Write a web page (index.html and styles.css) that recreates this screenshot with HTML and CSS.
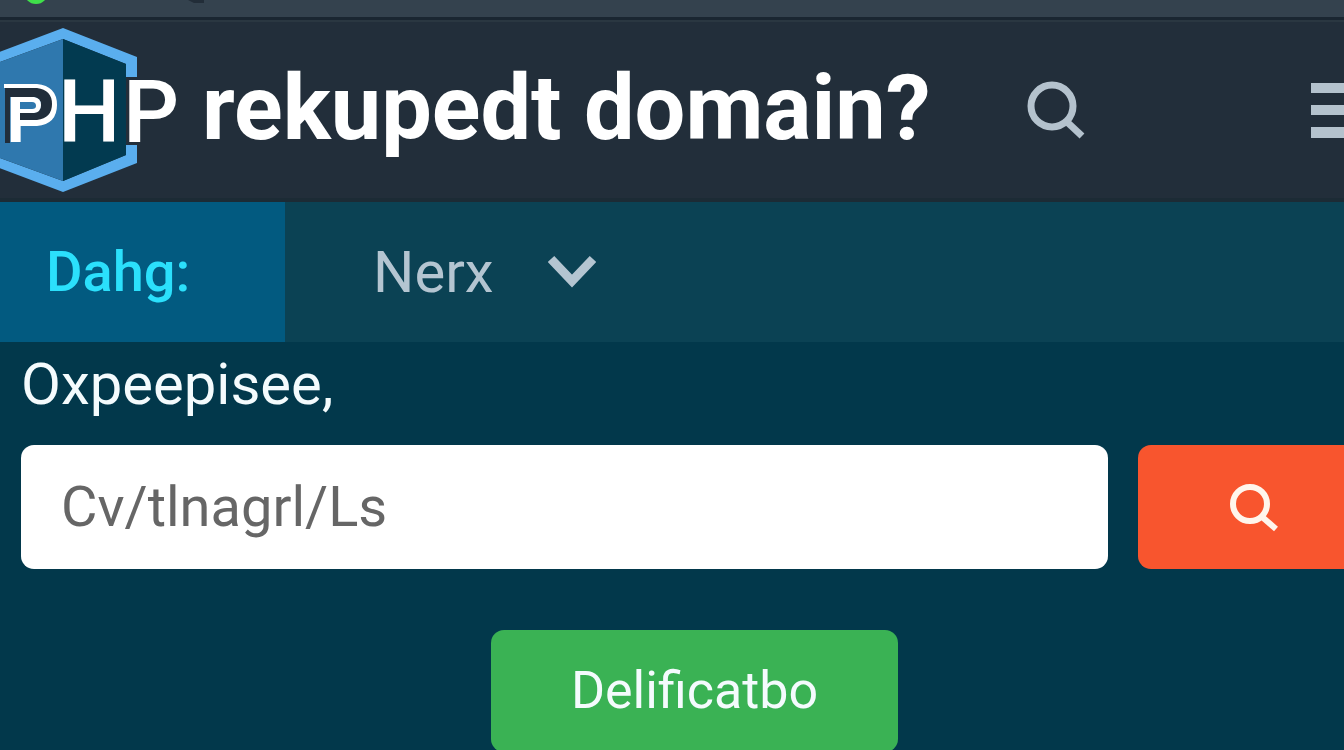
FILE: index.html
```html
<!DOCTYPE html>
<html lang="en">
<head>
<meta charset="utf-8">
<meta name="viewport" content="width=device-width, initial-scale=1">
<title>PHP rekupedt domain?</title>
<link rel="stylesheet" href="styles.css">
</head>
<body>
<div class="topbar">
  <svg class="topbar-marks" width="220" height="16" viewBox="0 0 220 16" aria-hidden="true">
    <circle cx="36" cy="-8" r="12" fill="#3fe04a"/>
    <path d="M188 0h16v3h-10z" fill="#222d38"/>
  </svg>
</div>
<header class="header">
  <h1 class="brand">
    <span class="logo">
      <svg class="logo-shape" width="140" height="164" viewBox="0 0 140 164" aria-hidden="true">
        <path d="M63 0L137 29V49H126V36L63 11L-11 38V126L63 153L126 127V117H137V135L63 164L-22 132V32Z" fill="#5aaeee"/>
        <path d="M63 11L-11 38V126L63 153Z" fill="#2f78ae"/>
        <path d="M63 11L126 36V127L63 153Z" fill="#023a50"/>
      </svg>
      <span class="logo-text"><span class="letter letter-inlaid">P</span><span class="letter">H</span><span class="letter">P</span></span>
      <svg class="logo-inlay" width="60" height="164" viewBox="0 0 60 164" aria-hidden="true">
        <path d="M4 56H37Q57 58 57 77Q57 96 37 98H20V92H37Q51 90 51 76Q51 62 37 60H4Z" fill="#fff"/>
        <path d="M5 60H37Q52 62 52 76Q52 90 37 92H20V85H34Q41 83 41 77Q41 70 34 69H10V115H5Z" fill="#212d3a"/>
        <path d="M20 69H34Q41 70 41 77Q41 84 34 85H20Z" fill="#fff"/>
        <path d="M20 74H32Q36 74 36 78Q36 81 32 81H20Z" fill="#2f78ae"/>
      </svg>
    </span>
    <span class="brand-name">rekupedt domain?</span>
  </h1>
  <button class="icon-button" type="button" aria-label="Search">
    <svg width="60" height="60" viewBox="0 0 60 60" fill="none" stroke="currentColor" aria-hidden="true">
      <circle cx="25" cy="26" r="21" stroke-width="7"/>
      <path d="M39 41L55 56" stroke-width="7"/>
    </svg>
  </button>
  <button class="menu-button" type="button" aria-label="Menu">
    <svg width="60" height="56" viewBox="0 0 60 56" fill="currentColor" aria-hidden="true">
      <path d="M0 1H60V11H0ZM0 23H60V33H0ZM0 45H60V56H0Z"/>
    </svg>
  </button>
</header>
<nav class="tabs">
  <a class="tab tab-active" href="#dahg">Dahg:</a>
  <button class="tab tab-menu" type="button">Nerx
    <svg width="48" height="34" viewBox="0 0 48 34" fill="none" stroke="currentColor" stroke-width="9" aria-hidden="true"><path d="M3 4L24 26L45 4"/></svg>
  </button>
</nav>
<main class="content">
  <form class="search">
    <label class="search-label" for="query">Oxpeepisee,</label>
    <div class="search-row">
      <input class="search-input" id="query" type="text" value="Cv/tlnagrl/Ls">
      <button class="search-button" type="submit" aria-label="Search">
        <svg width="50" height="50" viewBox="0 0 50 50" fill="none" stroke="currentColor" aria-hidden="true">
          <circle cx="21" cy="22" r="17" stroke-width="6"/>
          <path d="M32 34L47 47" stroke-width="6"/>
        </svg>
      </button>
    </div>
    <button class="primary-button" type="button">Delificatbo</button>
  </form>
</main>
</body>
</html>
```
FILE: styles.css
```css
* {
  box-sizing: border-box;
}

body {
  margin: 0;
  overflow: hidden;
  background: #02384b;
  color: #f4fbfd;
  font-family: Roboto, "Liberation Sans", sans-serif;
  font-size: 56px;
  line-height: 64px;
}

button,
input {
  border: 0;
  font: inherit;
}

button {
  padding: 0;
  background: none;
  color: inherit;
}

svg {
  display: block;
  flex: none;
}

.topbar {
  height: 20px;
  background: #34424e;
  border-bottom: 3px solid #1a2631;
}

.header {
  display: flex;
  align-items: center;
  height: 182px;
  overflow: hidden;
  background: #222e3a;
  border-top: 2px solid #2a3741;
  border-bottom: 4px solid #1c2b35;
  color: #b4c2cd;
}

.brand {
  display: flex;
  align-items: center;
  gap: 22px;
  margin: 0;
  color: #fff;
  white-space: nowrap;
}

.logo {
  display: grid;
  width: 180px;
}

.logo > * {
  grid-area: 1 / 1;
  align-self: center;
}

.logo-text {
  display: grid;
  grid-template-columns: 58px 65px 57px;
  align-items: baseline;
  padding-top: 6px;
  font-size: 88px;
  font-weight: 500;
  line-height: 96px;
}

.letter-inlaid {
  padding-left: 5px;
  font-size: 80px;
}

.brand-name {
  padding-bottom: 2px;
  font-size: 90px;
  font-weight: 700;
  line-height: 96px;
}

.icon-button {
  margin-left: 96px;
}

.menu-button {
  margin-left: auto;
  margin-right: -27px;
}

.tabs {
  display: flex;
  height: 140px;
  background: #0b4254;
}

.tab {
  display: flex;
  align-items: center;
  color: #b4c5d1;
}

.tab-active {
  width: 285px;
  padding-left: 46px;
  background: #025a80;
  color: #2be0fc;
  font-weight: 500;
  text-decoration: none;
}

.tab-menu {
  gap: 54px;
  padding-left: 88px;
  font-size: 58px;
}

.content {
  padding: 10px 0 0 21px;
}

.search {
  display: flex;
  flex-direction: column;
  gap: 29px;
}

.search-label {
  font-size: 58px;
}

.search-row {
  display: flex;
  gap: 30px;
  height: 124px;
}

.search-input {
  flex: 1;
  min-width: 0;
  padding: 0 40px;
  border-radius: 13px;
  background: #fff;
  color: #666;
}

.search-button {
  display: grid;
  place-items: center;
  width: 232px;
  margin-right: -26px;
  border-radius: 13px;
  background: #f8552e;
  color: #fff5ec;
}

.primary-button {
  align-self: center;
  width: 407px;
  height: 122px;
  margin-top: 32px;
  margin-left: 24px;
  border-radius: 13px;
  background: #3ab254;
  font-size: 52px;
}
```
